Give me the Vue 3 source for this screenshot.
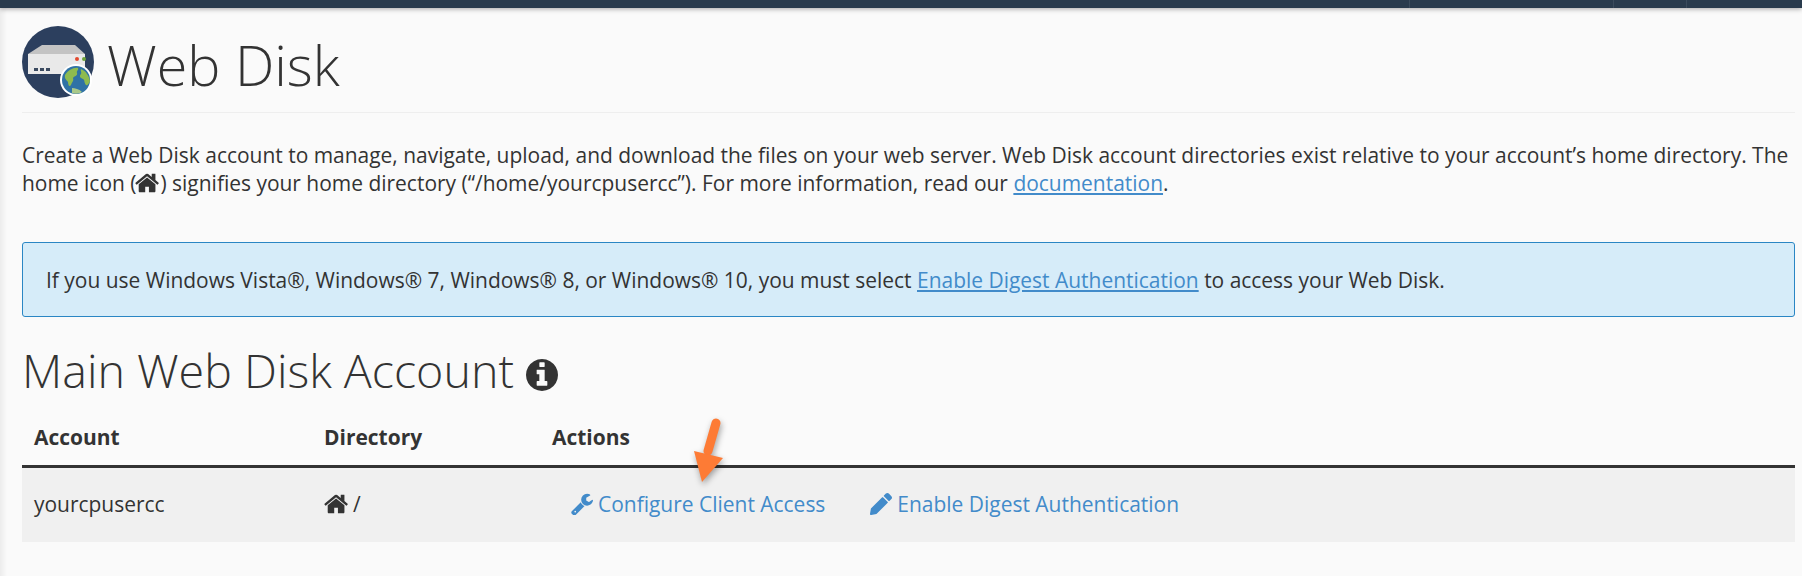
<script setup>
const home = 'M1408 992v480q0 26-19 45t-45 19h-384v-384h-256v384h-384q-26 0-45-19t-19-45v-480q0-1 .5-3t.5-3l575-474 575 474q1 2 1 6zm223-69l-62 74q-8 9-21 11h-3q-13 0-21-7l-692-577-692 577q-12 8-24 7-13-2-21-11l-62-74q-8-10-7-23.5t11-21.5l719-599q32-26 76-26t76 26l244 204v-195q0-14 9-23t23-9h192q14 0 23 9t9 23v408l219 182q10 8 11 21.5t-7 23.5z'
const wrench = 'M448 1472q0-26-19-45t-45-19-45 19-19 45 19 45 45 19 45-19 19-45zm644-420l-682 682q-37 37-90 37-52 0-91-37l-106-108q-38-36-38-90 0-53 38-91l681-681q39 98 114.5 173.5t173.5 114.5zm634-435q0 39-23 106-47 134-164.5 217.5t-258.5 83.5q-185 0-316.5-131.5t-131.5-316.5 131.5-316.5 316.5-131.5q58 0 121.5 16.5t107.5 46.5q16 11 16 28t-16 28l-293 169v224l193 107q5-3 79-48.5t135.5-81 70.5-35.5q15 0 23.5 10t8.5 25z'
const pencil = 'M497.9 142.1l-46.1 46.1c-4.7 4.7-12.3 4.7-17 0l-111-111c-4.7-4.7-4.7-12.3 0-17l46.1-46.1c18.7-18.7 49.1-18.7 67.9 0l60.1 60.1c18.8 18.7 18.8 49.1 0 67.9zM284.2 99.8L21.6 362.4.4 483.9c-2.9 16.4 11.4 30.6 27.8 27.8l121.5-21.3 262.6-262.6c4.7-4.7 4.7-12.3 0-17l-111-111c-4.8-4.7-12.4-4.7-17.1 0z'
const info = 'M1152 1376v-160q0-14-9-23t-23-9h-96v-512q0-14-9-23t-23-9h-320q-14 0-23 9t-9 23v160q0 14 9 23t23 9h96v320h-96q-14 0-23 9t-9 23v160q0 14 9 23t23 9h448q14 0 23-9t9-23zm-128-896v-160q0-14-9-23t-23-9h-192q-14 0-23 9t-9 23v160q0 14 9 23t23 9h192q14 0 23-9t9-23zm640 416q0 209-103 385.5t-279.5 279.5-385.5 103-385.5-103-279.5-279.5-103-385.5 103-385.5 279.5-279.5 385.5-103 385.5 103 279.5 279.5 103 385.5z'
</script>

<template>
  <div class="page">
    <div class="topbar">
      <span class="sep s1"></span>
      <span class="sep s2"></span>
      <span class="sep s3"></span>
    </div>
    <main class="content">
      <header class="title">
        <svg class="logo" viewBox="0 0 72 72" width="72" height="72" aria-hidden="true">
          <circle cx="36" cy="36" r="36" fill="#2c3f5e" />
          <polygon points="6,28 20,19 53,19 63,28" fill="#c3c3c3" />
          <rect x="6" y="28" width="57" height="20" fill="#e9e9e9" />
          <circle cx="55" cy="33" r="2" fill="#e2492f" />
          <circle cx="62" cy="33" r="2" fill="#6fa33a" />
          <rect x="12" y="42" width="4" height="3" fill="#3b4a60" />
          <rect x="18" y="42" width="4" height="3" fill="#3b4a60" />
          <rect x="24" y="42" width="4" height="3" fill="#3b4a60" />
          <circle cx="54" cy="54" r="16" fill="#fff" />
          <circle cx="54" cy="54" r="14" fill="#2f72a5" />
          <path d="M43 49c3-5 9-8 13-7 1 2-2 3-1 5 1 3-3 3-4 5 1 3-1 4-2 7-2 3-3-1-3-3-1-2-4-3-3-7z" fill="#8ebb4f" />
          <path d="M59 43c5 2 8 7 9 12-1 3-3 5-4 4-2-2-1-5-3-6-3-1-4-3-2-5 1-2-1-3 0-5z" fill="#8ebb4f" />
          <path d="M50 62c3 0 7 1 10 4-3 2-7 2-10 1z" fill="#a9c98a" />
        </svg>
        <h1>Web Disk</h1>
      </header>

      <p class="intro">Create a Web Disk account to manage, navigate, upload, and download the files on your web server. Web Disk account directories exist relative to your account’s home directory. The home icon (<svg class="fa home-inline" viewBox="0 0 1792 1792"><path :d="home" /></svg>) signifies your home directory (“/home/yourcpusercc”). For more information, read our <a href="#">documentation</a>.</p>

      <div class="alert">If you use Windows Vista®, Windows® 7, Windows® 8, or Windows® 10, you must select <a href="#">Enable Digest Authentication</a> to access your Web Disk.</div>

      <h2>Main Web Disk Account <svg class="fa info" viewBox="128 128 1536 1536"><path :d="info" /></svg></h2>

      <div class="table">
        <div class="row head">
          <div class="c1">Account</div>
          <div class="c2">Directory</div>
          <div class="c3">Actions</div>
        </div>
        <div class="row body">
          <div class="c1">yourcpusercc</div>
          <div class="c2 dir"><svg class="fa home-cell" viewBox="0 0 1792 1792"><path :d="home" /></svg> /</div>
          <div class="c3 actions">
            <a class="action first" href="#"><svg class="fa act" viewBox="64 64 1664 1664"><path :d="wrench" /></svg>Configure Client Access</a>
            <a class="action" href="#"><svg class="fa act" viewBox="0 0 512 512"><path :d="pencil" /></svg>Enable Digest Authentication</a>
          </div>
        </div>
      </div>
    </main>

    <svg class="arrow" width="60" height="90" viewBox="0 0 60 90" aria-hidden="true">
      <path d="M26 8 L18 36" stroke="#fd7b35" stroke-width="9" stroke-linecap="round" fill="none" />
      <polygon points="4,36 33,43 12,67" fill="#fd7b35" />
    </svg>
  </div>
</template>

<style>
html, body { margin: 0; background: #fafafa; }
</style>

<style scoped>
.page {
  position: relative;
  width: 1802px;
  height: 576px;
  overflow: hidden;
  background: linear-gradient(to right, #ececec 0, #f4f4f4 4px, #fafafa 7px);
  font-family: "Open Sans", sans-serif;
  color: #333;
}
.topbar {
  position: relative;
  height: 8px;
  background: #293b4d;
  box-shadow: 0 1px 5px rgba(0, 0, 0, .35);
}
.sep {
  position: absolute;
  top: 0;
  width: 1px;
  height: 8px;
  background: #3a4b5c;
}
.s1 { left: 1409px; }
.s2 { left: 1613px; }
.s3 { left: 1686px; }
.content {
  padding: 18px 7px 0 22px;
}
.title {
  display: flex;
  align-items: center;
  gap: 13px;
  height: 86px;
  border-bottom: 1px solid #eee;
}
.logo { flex: none; margin-top: -14px; }
h1 {
  margin: -10px 0 0;
  font-size: 55.7px;
  font-weight: 300;
  line-height: 72px;
  color: #333;
}
.intro {
  margin: 29px 0 0;
  font-size: 20.96px;
  line-height: 27.5px;
}
a { color: #428bca; }
.fa { fill: currentColor; }
.home-inline {
  width: 26px;
  height: 26px;
  margin: 0 -1px;
  vertical-align: -5px;
}
.alert {
  margin-top: 45px;
  height: 75px;
  box-sizing: border-box;
  padding: 0 23px;
  display: flex;
  align-items: center;
  white-space: pre-wrap;
  background: #d6ecf9;
  border: 1px solid #2a86c4;
  border-radius: 3px;
  font-size: 20.96px;
}
h2 {
  margin: 21px 0 0;
  font-size: 46.6px;
  font-weight: 300;
  line-height: 64px;
  color: #333;
}
.info {
  width: 32px;
  height: 32px;
  vertical-align: -3px;
}
.table { margin-top: 15px; font-size: 20.96px; }
.row { display: flex; }
.c1 { width: 290px; padding-left: 12px; box-sizing: border-box; flex: none; }
.c2 { width: 228px; padding-left: 12px; box-sizing: border-box; flex: none; }
.c3 { padding-left: 12px; flex: 1; }
.head {
  height: 51px;
  padding-bottom: 8px;
  box-sizing: border-box;
  align-items: center;
  font-weight: 700;
  border-bottom: 3px solid #333;
}
.body {
  height: 74px;
  box-sizing: border-box;
  padding-bottom: 2px;
  align-items: center;
  background: #f0f0f0;
}
.dir { display: flex; align-items: center; gap: 3px; }
.home-cell { width: 26px; height: 26px; }
.actions { display: flex; align-items: center; padding-left: 31px; }
.action {
  display: inline-flex;
  align-items: center;
  gap: 5px;
  color: #428bca;
  text-decoration: none;
}
.action.first { margin-right: 45px; }
.act { width: 22px; height: 22px; }
.arrow {
  position: absolute;
  left: 690px;
  top: 415px;
  overflow: visible;
  filter: drop-shadow(1px 3px 3px rgba(0, 0, 0, .35));
}
</style>
